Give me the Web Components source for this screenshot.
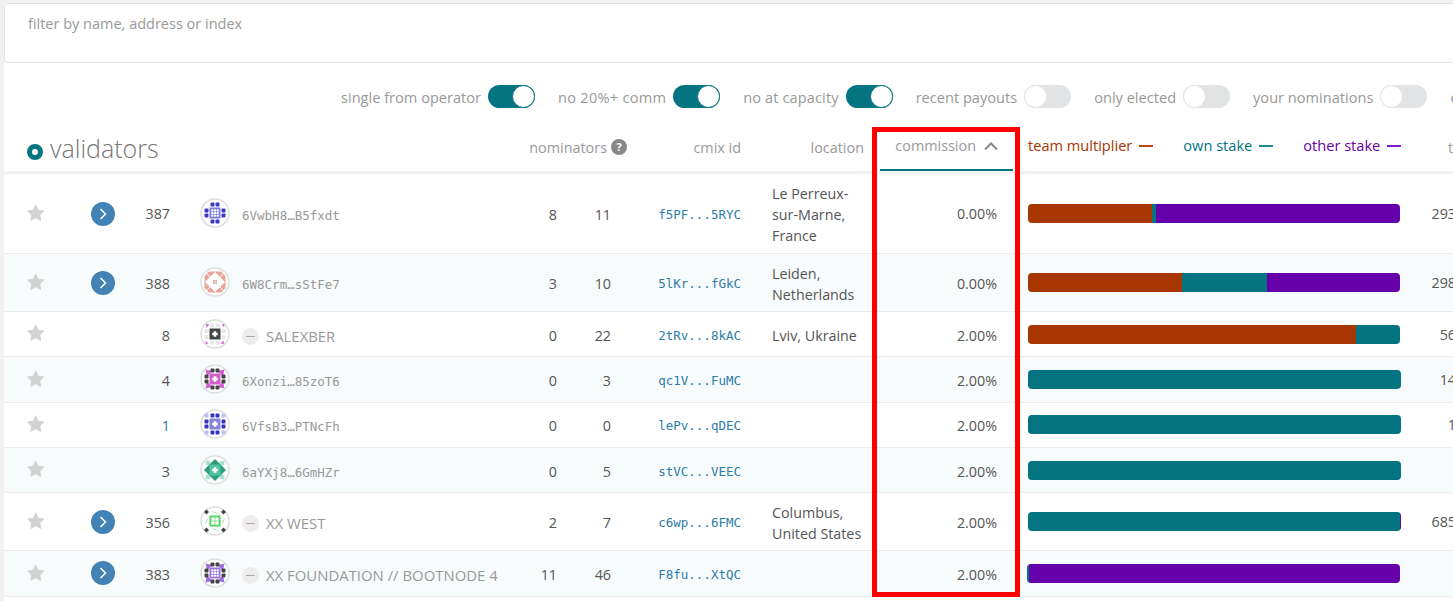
<!DOCTYPE html>
<html>
<head>
<meta charset="utf-8">
<title>validators</title>
<style>
  html, body { margin: 0; height: 601px; overflow: hidden; background: #f3f1ef; }
  body { padding: 3px 0 0 4px; box-sizing: border-box; font-family: "Open Sans", sans-serif; font-size: 14px; color: #555; }
  validator-app {
    --cols: 75px 48px 55px 338px 49px 54px 130px 127px 133px 402px 60px;
    --teal: #047481;
    --orange: #a83600;
    --purple: #6600aa;
    --link: #2b7ca8;
  }
</style>
</head>
<body>
<validator-app>
  <filter-box placeholder="filter by name, address or index"></filter-box>
  <toggle-row>
    <toggle-switch on>single from operator</toggle-switch>
    <toggle-switch on style="letter-spacing:.25px">no 20%+ comm</toggle-switch>
    <toggle-switch on style="letter-spacing:.1px">no at capacity</toggle-switch>
    <toggle-switch>recent payouts</toggle-switch>
    <toggle-switch>only elected</toggle-switch>
    <toggle-switch>your nominations</toggle-switch>
    <toggle-switch>o</toggle-switch>
  </toggle-row>
  <table-header></table-header>
  <validator-row h="80" lift expand idx="387" icon="blue" addr="6VwbH8…B5fxdt" own="8" nom="11" cmix="f5PF...5RYC" comm="0.00%" bars="orange:123.5,teal:4.5,purple:244" total="293">Le Perreux-<br>sur-Marne,<br>France</validator-row>
  <validator-row h="58" alt expand idx="388" icon="salmon" addr="6W8Crm…sStFe7" own="3" nom="10" cmix="5lKr...fGkC" comm="0.00%" bars="orange:154,teal:85,purple:133" total="298">Leiden,<br>Netherlands</validator-row>
  <validator-row idx="8" icon="grey" name="SALEXBER" own="0" nom="22" cmix="2tRv...8kAC" comm="2.00%" bars="orange:328,teal:44" total="56">Lviv, Ukraine</validator-row>
  <validator-row alt idx="4" icon="magenta" addr="6Xonzi…85zoT6" own="0" nom="3" cmix="qc1V...FuMC" comm="2.00%" bars="teal:373" total="14"></validator-row>
  <validator-row idx="1" link icon="indigo" addr="6VfsB3…PTNcFh" own="0" nom="0" cmix="lePv...qDEC" comm="2.00%" bars="teal:373" total="1"></validator-row>
  <validator-row alt idx="3" icon="emerald" addr="6aYXj8…6GmHZr" own="0" nom="5" cmix="stVC...VEEC" comm="2.00%" bars="teal:373"></validator-row>
  <validator-row h="58" expand idx="356" icon="green" name="XX WEST" own="2" nom="7" cmix="c6wp...6FMC" comm="2.00%" bars="teal:372,purple:1" total="685">Columbus,<br>United States</validator-row>
  <validator-row alt expand idx="383" icon="violet" name="XX FOUNDATION // BOOTNODE 4" own="11" nom="46" cmix="F8fu...XtQC" comm="2.00%" bars="teal:2,purple:371" shift></validator-row>
  <red-frame></red-frame>
</validator-app>

<script>
class ValidatorApp extends HTMLElement {
  constructor() {
    super();
    this.attachShadow({ mode: 'open' });
    this.shadowRoot.innerHTML = `
      <style>
        :host { display: block; position: relative; width: 1500px; height: 598px; background: #fff; }
      </style>
      <slot></slot>
    `;
  }
}

class FilterBox extends HTMLElement {
  constructor() {
    super();
    this.attachShadow({ mode: 'open' });
    this.shadowRoot.innerHTML = `
      <style>
        :host { display: block; }
        .box {
          height: 60px;
          box-sizing: border-box;
          padding: 10px 23px;
          border: 1px solid #e2e2e0;
          border-radius: 4px;
          background: #fff;
          color: #999;
          font-size: 14.5px;
          line-height: 20px;
        }
      </style>
      <div class="box">${this.getAttribute('placeholder')}</div>
    `;
  }
}

class ToggleRow extends HTMLElement {
  constructor() {
    super();
    this.attachShadow({ mode: 'open' });
    this.shadowRoot.innerHTML = `
      <style>
        :host { display: flex; gap: 23px; height: 61px; box-sizing: border-box; padding: 22px 0 0 337px; white-space: nowrap; }
      </style>
      <slot></slot>
    `;
  }
}

class ToggleSwitch extends HTMLElement {
  constructor() {
    super();
    this.attachShadow({ mode: 'open' });
    this.shadowRoot.innerHTML = `
      <style>
        :host { display: flex; align-items: center; gap: 7px; height: 23px; color: #999; font-size: 14.6px; flex: none; }
        .label { padding-top: 1px; }
        .track { width: 47px; height: 23px; box-sizing: border-box; border-radius: 12px; background: #e2e3e4; position: relative; flex: none; }
        .knob { position: absolute; left: 0; top: 0; width: 23px; height: 23px; box-sizing: border-box; border-radius: 50%; background: #fff; border: 1px solid #e2e3e4; }
        :host([on]) .track { background: var(--teal); }
        :host([on]) .knob { left: 24px; border-color: var(--teal); }
      </style>
      <span class="label"><slot></slot></span>
      <div class="track"><div class="knob"></div></div>
    `;
  }
}

class TableHeader extends HTMLElement {
  constructor() {
    super();
    this.attachShadow({ mode: 'open' });
    this.shadowRoot.innerHTML = `
      <style>
        :host {
          display: grid;
          grid-template-columns: var(--cols);
          height: 50px;
          box-sizing: border-box;
          border-bottom: 3px solid #f2f2f2;
          color: #999;
          font-size: 14.4px;
          white-space: nowrap;
        }
        .title { grid-column: 1 / 5; display: flex; align-items: center; gap: 7px; padding: 0 0 0 23px; font-size: 25px; font-weight: 300; color: #777; }
        .dot { width: 16px; height: 16px; box-sizing: border-box; border: 5px solid var(--teal); border-radius: 50%; margin-top: 8px; }
        .cell { display: flex; align-items: center; justify-content: flex-end; padding-top: 1px; padding-bottom: 2px; }
        .nominators { grid-column: 5 / 7; gap: 4px; margin-right: -4px; }
        .help { width: 16px; height: 16px; border-radius: 50%; background: #888; color: #fff; font-size: 11px; font-weight: 700; line-height: 16px; text-align: center; }
        .cmix { padding-right: 12px; }
        .location { padding-right: 16px; }
        .commission { border-bottom: 2px solid var(--teal); padding: 0 15px 2px 0; gap: 8px; }
        .legend { justify-content: flex-start; padding: 0 0 5px 15px; gap: 30px; font-size: 14.6px; }
        .legend span { display: flex; align-items: center; gap: 7px; }
        .legend i { display: block; width: 14px; height: 2px; margin-top: 1px; }
        .total { justify-content: flex-start; padding-left: 33px; }
      </style>
      <div class="title"><div class="dot"></div>validators</div>
      <div class="cell nominators">nominators <div class="help">?</div></div>
      <div class="cell cmix">cmix id</div>
      <div class="cell location">location</div>
      <div class="cell commission">commission
        <svg width="14" height="8" viewBox="0 0 14 8" fill="none" stroke="#888" stroke-width="2"><path d="M1 7.5 7 1.5l6 6"/></svg>
      </div>
      <div class="cell legend">
        <span style="color:var(--orange)">team multiplier <i style="background:#c2451a"></i></span>
        <span style="color:var(--teal)">own stake <i style="background:#1b8c99"></i></span>
        <span style="color:var(--purple)">other stake <i style="background:#8418c4"></i></span>
      </div>
      <div class="cell total">t</div>
    `;
  }
}

// small svg helpers for the identicons
const sq = (x, y, c, s = 4, r = 1) => `<rect x="${x}" y="${y}" width="${s}" height="${s}" rx="${r}" fill="${c}"/>`;
const ring = (c, s = 4) => [[10.5, 4.5], [15.5, 4.5], [10.5, 21.5], [15.5, 21.5], [4.5, 10.5], [4.5, 15.5], [21.5, 10.5], [21.5, 15.5]].map(p => sq(p[0], p[1], c, s)).join('');
const core = c => `<rect x="9.500" y="9.500" width="11" height="11" fill="${c}"/>`;
const plus = c => `<path d="M13.700 12.200h2.600v1.500h1.500v2.600h-1.500v1.500h-2.600v-1.500h-1.500v-2.600h1.500z" fill="${c}"/>`;
const hash = (c, n = 3) => {
  let out = '';
  const s = 8 / n;
  for (let i = 0; i < n; i++) for (let j = 0; j < n; j++) out += `<rect x="${11 + i * s + .3}" y="${11 + j * s + .3}" width="${s - .6}" height="${s - .6}" fill="${c}"/>`;
  return out;
};
// four small pinwheel corners, and a larger set that sits behind dark blocks
const tris = c => `<path d="M6 5l3.500.5-3 3zM24 5l.5 3.500-3-3zM24 25l-3.500-.5 3-3zM6 25l-.5-3.500 3 3z" fill="${c}"/>`;
const wedges = c => `<path d="M5.500 5.500l7 1.500-5.500 5.500zM24.500 5.500l-1.500 7-5.500-5.500zM24.500 24.500l-7-1.500 5.500-5.500zM5.500 24.500l1.500-7 5.500 5.500z" fill="${c}"/>`;

const IDENTICONS = {
  blue: ring('#3b3bc4') + core('#7d7de0') + hash('#fff', 3),
  salmon: `<path d="M9 4.500h12l4.500 4.500v12L21 25.500H9L4.500 21V9z" fill="#e8a699"/><path d="M15 5l10 10-10 10L5 15z" fill="#fff"/><path d="M5 5l5 5M25 5l-5 5M5 25l5-5M25 25l-5-5" stroke="#fff" stroke-width="1"/><g transform="translate(7.500 7.500) scale(.5)">${hash('#cf7f70', 3)}</g>`,
  grey: [[10, 4.500], [16, 4.500], [4.500, 10], [21.500, 10], [4.500, 16], [21.500, 16], [10, 21.500], [16, 21.500]].map(p => sq(p[0], p[1], '#e6e6e6')).join('') + core('#444') + plus('#fff') + tris('#d35fd3'),
  magenta: wedges('#d35fd3') + ring('#444') + core('#d35fc8') + plus('#fff'),
  indigo: [[4.500, 4.500], [21.500, 4.500], [4.500, 21.500], [21.500, 21.500]].map(p => sq(p[0], p[1], '#bdbdee')).join('') + ring('#3434c0') + core('#8585dc') + plus('#fff'),
  emerald: [[6, 6], [20, 6], [6, 20], [20, 20]].map(p => `<circle cx="${p[0] + 2}" cy="${p[1] + 2}" r="2.500" fill="#a8e2ce"/>`).join('') + `<path d="M15 4l11 11-11 11L4 15z" fill="#2f9a7c"/>` + core('#52c2a2') + plus('#fff'),
  green: `<path d="M11 5l5 1 2 2-4-1zM19 25l-5-1-2-2 4 1zM5 19l1-5 2-2-1 4zM25 11l-1 5-2 2 1-4z" fill="#b8e8bc"/>` + [[6.500, 6], [23.500, 6], [6.500, 24], [23.500, 24]].map(p => `<path d="M${p[0]} ${p[1] - 2.500}l2.500 2.500-2.500 2.500-2.500-2.500z" fill="#444"/>`).join('') + core('#52d060') + hash('#fff', 2),
  violet: wedges('#9a70e0') + ring('#444') + core('#9a70e0') + hash('#fff', 3),
};

class IdentIcon extends HTMLElement {
  constructor() {
    super();
    this.attachShadow({ mode: 'open' });
    this.shadowRoot.innerHTML = `
      <style>
        :host { display: block; width: 30px; height: 30px; }
        svg { display: block; }
      </style>
      <svg width="30" height="30" viewBox="0 0 30 30">
        <circle cx="15" cy="15" r="14" fill="#fff" stroke="#dedede" stroke-width="1.500"/>
        ${IDENTICONS[this.getAttribute('kind')] || ''}
      </svg>
    `;
  }
}

class StakeBar extends HTMLElement {
  constructor() {
    super();
    this.attachShadow({ mode: 'open' });
    const parts = (this.getAttribute('parts') || '').split(',').filter(Boolean).map(p => p.split(':'));
    this.shadowRoot.innerHTML = `
      <style>
        :host { display: flex; height: 19px; border-radius: 4px; overflow: hidden; width: max-content; }
        div { height: 100%; flex: none; }
      </style>
      ${parts.map(p => `<div style="width:${p[1]}px;background:var(--${p[0]})"></div>`).join('')}
    `;
  }
}

class ValidatorRow extends HTMLElement {
  constructor() {
    super();
    this.attachShadow({ mode: 'open' });
    this.render();
  }

  render() {
    const a = n => this.getAttribute(n) || '';
    const has = n => this.hasAttribute(n);
    const who = has('name')
      ? `<span class="badge"><i></i></span><span class="label">${a('name')}</span>`
      : `<span class="addr">${a('addr')}</span>`;
    this.shadowRoot.innerHTML = `
      <style>
        :host {
          display: grid;
          grid-template-columns: var(--cols);
          align-items: center;
          box-sizing: border-box;
          height: ${a('h') || 45.33}px;
          border-bottom: 1px solid #ececec;
          background: ${has('alt') ? '#f8fbfc' : '#fff'};
          font-size: 14.3px;
          line-height: 21px;
          color: #555;
          white-space: nowrap;
        }
        .star { padding: 0 0 2px 22px; display: flex; }
        .expand { display: flex; justify-content: center; }
        .chev { width: 24px; height: 24px; border-radius: 50%; background: #4382b4; display: flex; align-items: center; justify-content: center; }
        .idx, .num { text-align: right; padding: 2px 12px 0 0; }
        :host([lift]) .idx { padding-top: 0; }
        .idx.link { color: var(--link); }
        .who { display: flex; align-items: center; padding-left: 18px; }
        .who ident-icon { margin: -1px 12px 0 0; }
        .addr { font-family: "DejaVu Sans Mono", monospace; font-size: 12.500px; color: #999; padding-top: 4px; }
        .badge { width: 17px; height: 17px; border-radius: 50%; background: #eeedec; display: flex; align-items: center; justify-content: center; margin: 4px 7px 0 0; flex: none; }
        .badge i { display: block; width: 9px; height: 1px; background: #aaa; }
        .label { color: #999; padding-top: 4px; font-size: 14.9px; }
        .cmix { font-family: "DejaVu Sans Mono", monospace; font-size: 12.500px; color: var(--link); text-align: right; padding: 2px 12px 0 0; }
        .loc { padding: 2px 0 0 19px; }
        .comm { text-align: right; padding: 2px 16px 0 0; }
        :host([lift]) .comm { padding-top: 0; }
        .bar { padding-left: 15px; }
        .bar.shift { padding-left: 14px; }
        .total { text-align: right; padding-right: 19px; }
      </style>
      <div class="star">
        <svg width="19.500" height="19.500" viewBox="0 0 18 18"><path d="M9 2l2.200 4.700 5 .7-3.600 3.500.9 5L9 13.500 4.500 15.900l.9-5L1.800 7.400l5-.7z" fill="#d2d2d2" stroke="#d2d2d2" stroke-width="1" stroke-linejoin="round"/></svg>
      </div>
      <div class="expand">${has('expand') ? `<div class="chev"><svg width="10" height="14" viewBox="0 0 10 14" fill="none" stroke="#fff" stroke-width="1.500"><path d="M2.500 2l5 5-5 5"/></svg></div>` : ''}</div>
      <div class="idx ${has('link') ? 'link' : ''}">${a('idx')}</div>
      <div class="who"><ident-icon kind="${a('icon')}"></ident-icon>${who}</div>
      <div class="num">${a('own')}</div>
      <div class="num">${a('nom')}</div>
      <div class="cmix">${a('cmix')}</div>
      <div class="loc"><slot></slot></div>
      <div class="comm">${a('comm')}</div>
      <div class="bar ${has('shift') ? 'shift' : ''}"><stake-bar parts="${a('bars')}"></stake-bar></div>
      <div class="total">${a('total')}</div>
    `;
  }
}

class RedFrame extends HTMLElement {
  constructor() {
    super();
    this.attachShadow({ mode: 'open' });
    this.shadowRoot.innerHTML = `
      <style>
        /* annotation drawn over the table */
        :host { display: block; position: absolute; left: 868px; top: 124px; width: 148px; height: 470px; box-sizing: border-box; border: 5px solid #f00; pointer-events: none; }
      </style>
    `;
  }
}

customElements.define('ident-icon', IdentIcon);
customElements.define('stake-bar', StakeBar);
customElements.define('validator-app', ValidatorApp);
customElements.define('filter-box', FilterBox);
customElements.define('toggle-row', ToggleRow);
customElements.define('toggle-switch', ToggleSwitch);
customElements.define('table-header', TableHeader);
customElements.define('validator-row', ValidatorRow);
customElements.define('red-frame', RedFrame);
</script>
</body>
</html>
